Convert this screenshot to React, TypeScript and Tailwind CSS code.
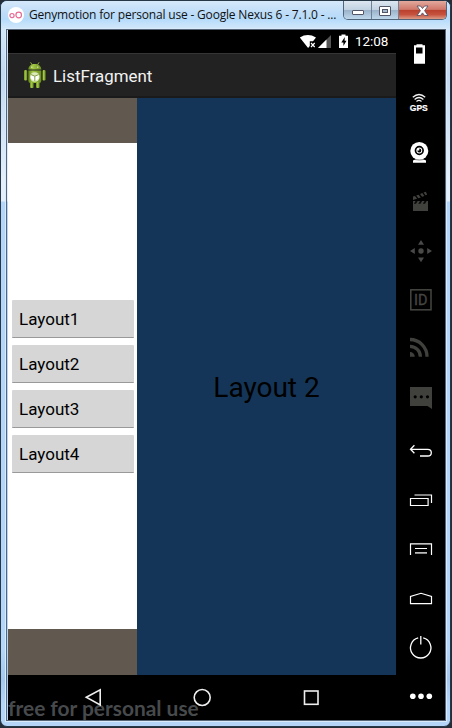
import React from "react";

const SIDEBAR_ICONS: React.ReactNode[] = [
  <g fill="#fff">
    <path fillRule="evenodd" d="M416.5 44.3h6v1h2.5v18.5h-11V45.3h2.5zM416 47.5v6h6.5v-6z" />
  </g>,
  <g fill="none" stroke="#f2f2f2" strokeWidth="1.3">
    <path d="M412.8 97.2Q419 91.8 425.2 97.2M414.6 99.4Q419 95.6 423.4 99.4M416.5 101.4Q419 99.4 421.5 101.4" />
    <text x="409.8" y="110.6" fill="#fff" stroke="#fff" strokeWidth="0.2" fontSize="8.6" fontWeight="700" fontFamily="'Liberation Sans', sans-serif" textLength="18" lengthAdjust="spacingAndGlyphs">GPS</text>
  </g>,
  <g>
    <circle cx="419.3" cy="150.9" r="9" fill="#fff" />
    <path d="M413 162.7v-2.2l3-1.5h7l3 1.5v2.2z" fill="#fff" />
    <path d="M411.5 158.4q7.8 3.2 15.6 0" fill="none" stroke="#000" strokeWidth=".5" />
    <circle cx="419.3" cy="150.5" r="3.8" fill="#fff" stroke="#000" strokeWidth="1.7" />
    <path d="M419.3 148.6v2h-2a2 2 0 1 0 2-2z" fill="#000" />
  </g>,
  <g fill="#40403d">
    <path d="M413 201h15v10h-15zM413 200v-3.4l2-.5 2.1 2.7-2.6.8zM416.2 195.6l2.4-.9 2.2 2.8-2.5.8zM420 194l2.3-.9 2.1 2.8-2.3.8zM423.6 192.6l2.2-.9 1.4 2.8-1.7.7z" />
    <path d="M415.5 201l-1.7 2.7h2.2l1.7-2.7zM420 201l-1.7 2.7h2.2l1.7-2.7zM424.5 201l-1.7 2.7h2.2l1.7-2.7z" fill="#090909" />
  </g>,
  <g fill="#494947">
    <circle cx="421" cy="251" r="2.7" />
    <path d="M421 240l3 4.8h-6zM421 262.2l3-4.8h-6zM410 251l4.8-3v6zM432 251l-4.8-3v6z" />
  </g>,
  <g>
    <rect x="410.8" y="289.8" width="20.2" height="20" fill="none" stroke="#454541" strokeWidth="1.5" />
    <text x="414.1" y="305" fill="#454541" stroke="#454541" strokeWidth=".35" fontSize="14" fontFamily="Roboto, sans-serif" textLength="13.4" lengthAdjust="spacingAndGlyphs">ID</text>
  </g>,
  <g fill="none" stroke="#40403d" strokeWidth="3.3">
    <path d="M410 339.5a17 17 0 0 1 17 17.2M410 346.3a10.4 10.4 0 0 1 10.4 10.4" />
    <path d="M410 352a4.8 4.8 0 0 1 4.8 4.8H410z" fill="#40403d" stroke="none" />
  </g>,
  <g>
    <path d="M410 387h22v22l-4.5-3H410z" fill="#40403d" />
    <g fill="#000"><circle cx="415.2" cy="396.8" r="1.6" /><circle cx="421.3" cy="396.8" r="1.6" /><circle cx="427.5" cy="396.8" r="1.6" /></g>
  </g>,
  <path d="M414.4 445.3l-3.9 4 3.9 4M410.5 449.4h17.2q3.6 0 3.6 3.3t-3.6 3.3H420" fill="none" stroke="#fff" strokeWidth="1.3" />,
  <g fill="none" stroke="#fff">
    <path d="M410.5 498.5h17.6v7h-17.6z" strokeWidth="1.2" />
    <path d="M414.5 495h17v8" strokeWidth="1.2" />
  </g>,
  <g fill="none" stroke="#fff">
    <path d="M410.5 555v-11.2h21V555" strokeWidth="1.2" />
    <path d="M415 548.5h12" />
    <path d="M415 552.8h12" stroke="#bbb" strokeWidth="1.8" />
  </g>,
  <path d="M410.5 603.7v-7.2l10.5-3.2 10.5 3.2v7.2z" fill="none" stroke="#fff" strokeWidth="1.2" />,
  <path d="M418.2 637.9a10.2 10.2 0 1 0 5 0M420.8 636v8.5" fill="none" stroke="#fff" strokeWidth="1.3" />,
  <g fill="#fff"><circle cx="412.8" cy="696.2" r="2.8" /><circle cx="421" cy="696.2" r="2.8" /><circle cx="429.3" cy="696.2" r="2.8" /></g>,
];

function TitleBar() {
  return (
    <div className="flex h-[28px] items-start bg-[linear-gradient(180deg,#d5e8fa_0%,#bddcf8_45%,#b5dbfa_65%,#d3e8fa_100%)] pl-[7px]">
      <svg className="mt-[6px] h-4 w-4 shrink-0" viewBox="0 0 16 16">
        <circle cx="8" cy="8" r="8" fill="#fff" />
        <g fill="none" stroke="#e76b93" strokeWidth="1.2"><circle cx="4" cy="8.6" r="2.1" /><circle cx="10.7" cy="8" r="2.8" /></g>
      </svg>
      <div className="ml-[5px] mt-[5px] w-[312px] whitespace-nowrap font-['Open_Sans',sans-serif] text-[12px] leading-[17px] tracking-[-0.18px] text-[#111]">
        Genymotion for personal use - Google Nexus 6 - 7.1.0 - ...
      </div>
      <div className="ml-[2px] flex h-[19px] w-[104px] overflow-hidden rounded-b-[5px] border border-t-0 border-[#51657a]">
        <div className="flex w-[28px] items-center justify-center border-r border-[#6d8297] bg-[linear-gradient(180deg,#dce6f0_0%,#c2d2e1_48%,#99b2c9_50%,#bfd7eb_100%)]">
          <div className="mt-[5px] h-[5px] w-[12px] rounded-[1px] border border-[#535666] bg-white" />
        </div>
        <div className="flex w-[27px] items-center justify-center border-r border-[#6d8297] bg-[linear-gradient(180deg,#dce6f0_0%,#c2d2e1_48%,#99b2c9_50%,#bfd7eb_100%)]">
          <div className="mt-[1px] flex h-[10px] w-[12px] items-center justify-center rounded-[1px] border border-[#535666] bg-white">
            <div className="h-[4px] w-[6px] border border-[#535666] bg-[#a5bacd]" />
          </div>
        </div>
        <div className="flex flex-1 items-center justify-center bg-[linear-gradient(180deg,#e3a99e_0%,#cf7769_47%,#b9402c_50%,#c6523d_75%,#dc9b85_100%)]">
          <svg className="mt-px h-[12px] w-[13px]" viewBox="0 0 13 12">
            <path d="M1 1h3.5l2 2.5 2-2.5H12L8.6 5.7 12 10.5H8.5l-2-2.6-2 2.6H1l3.4-4.8z" fill="#fff" stroke="#5a5364" strokeWidth=".9" />
          </svg>
        </div>
      </div>
    </div>
  );
}

function StatusBar() {
  return (
    <div className="flex h-[23px] items-start justify-end bg-black pr-[8px]">
      <svg className="mt-[4px] h-4 w-[50px]" viewBox="299 34 50 16">
        <path d="M299.8 37.4Q307.8 32.5 316 37.4l-3 3.8h-3.2v4.8l-1.7 2z" fill="#fff" />
        <path d="M311 43l3.7 4M314.7 43l-3.7 4" stroke="#fff" strokeWidth="1.2" />
        <path d="M331 35v13h-13z" fill="#555" />
        <path d="M326.5 39.5V48H318z" fill="#fff" />
        <path d="M341.5 34.5h4v1.3h2.5V48h-9V35.8h2.5z" fill="#fff" />
        <path d="M344.8 37l-3.5 5.4h2.1V46l3.1-5.2h-1.9z" fill="#000" />
      </svg>
      <div className="ml-[6px] mt-[2px] w-[33px] whitespace-nowrap font-[Roboto,sans-serif] text-[13.5px] leading-[18px] tracking-[-0.1px] text-white">12:08</div>
    </div>
  );
}

function ActionBar() {
  return (
    <div className="flex h-[45px] items-center border-b-2 border-t border-b-[#1a1a1a] border-t-[#353535] bg-[#222] pl-[15px]">
      <svg className="h-[28px] w-[24px]" viewBox="0 0 24 28">
        <defs>
          <linearGradient id="droid" x1="0" x2="1">
            <stop offset="0" stopColor="#63851b" /><stop offset=".35" stopColor="#a4ca45" /><stop offset="1" stopColor="#6b8d20" />
          </linearGradient>
        </defs>
        <path d="M7.6 1.4l2 3.2M16 1.4l-2 3.2" stroke="#91b43b" strokeWidth="1" />
        <g fill="url(#droid)">
          <path d="M5.3 8.5C5.3 1.2 18.3 1.2 18.3 8.5z" />
          <path d="M5.3 9.5h13v10q0 2.5-2.2 2.5H7.5q-2.2 0-2.2-2.5z" />
          <rect x="1" y="9" width="3.2" height="10.6" rx="1.4" />
          <rect x="19.4" y="9" width="3.2" height="10.6" rx="1.4" />
          <rect x="7" y="21" width="3.6" height="6" rx="1" />
          <rect x="13" y="21" width="3.6" height="6" rx="1" />
        </g>
        <circle cx="8.8" cy="6.1" r=".7" fill="#fff" /><circle cx="14.8" cy="6.1" r=".7" fill="#fff" />
        <circle cx="11.8" cy="16" r="4.8" fill="#dce9bc" />
        <path d="M8 13.6l3.8 1.6 3.8-1.6v4.2l-3.8 2.3L8 17.8z" fill="#fff" />
        <path d="M8 13.6l3.8 1.6 3.8-1.6M11.8 15.2v4.9" fill="none" stroke="#769536" strokeWidth=".9" />
      </svg>
      <div className="ml-[6px] mt-[2px] whitespace-nowrap font-[Roboto,sans-serif] text-[16.9px] leading-5 text-[#f2f2f2]">ListFragment</div>
    </div>
  );
}

function NavBar() {
  return (
    <div className="relative h-[45px] overflow-hidden bg-black">
      <div className="absolute left-0 top-[20px] whitespace-nowrap font-[Lato,sans-serif] text-[20.9px] font-bold leading-[26px] text-[#474a4c]">free for personal use</div>
      <svg className="relative block h-[45px] w-[388px]" viewBox="8 675 388 45" fill="none" stroke="#eee" strokeWidth="1.6">
        <path d="M86.3 697.3L100.2 689.8V705z" />
        <circle cx="202.2" cy="697.5" r="8" />
        <rect x="304.5" y="691" width="13.5" height="13.3" />
      </svg>
    </div>
  );
}

export default function App() {
  return (
    <div className="h-[728px] w-[452px] overflow-hidden bg-[#252e38]">
      <div className="flex h-[727px] w-[451px] flex-col overflow-hidden rounded-[7px] border border-[#263748] bg-[#b4d4f8]">
        <TitleBar />
        <div className="flex h-[692px] bg-[linear-gradient(180deg,#d4e8fb_0px,#c2d9f2_45px,#e4effb_150px,#e4effb_172px,#b4d6fb_173px,#b4d6fb_620px,#a4c8ef_650px,#b4d6fb_675px)] pl-[5px]">
          <div className="flex h-[692px] w-[440px] border border-[#566578] shadow-[0_0_0_1px_#d9eafb]">
            <div className="flex w-[389px] flex-col pl-px">
              <StatusBar />
              <ActionBar />
              <main className="flex h-[577px]">
                <section className="flex w-[129px] flex-col bg-[#61594f] pt-[45px]">
                  <div className="flex h-[486px] flex-col items-start justify-center gap-[7px] bg-white pl-[4px]">
                    {["Layout1", "Layout2", "Layout3", "Layout4"].map((label) => (
                      <button key={label} className="flex h-[38px] w-[122px] items-center rounded-[1px] border-b border-[#999] bg-[#d6d6d6] pl-[7px] pt-[3px] font-[Roboto,sans-serif] text-[17px] text-black">
                        {label}
                      </button>
                    ))}
                  </div>
                </section>
                <section className="flex flex-1 items-center justify-center bg-[#143557] pt-[2px] font-[Roboto,sans-serif] text-[28px] text-black">
                  Layout 2
                </section>
              </main>
              <NavBar />
            </div>
            <aside className="flex w-[49px] shrink-0 flex-col bg-black">
              {SIDEBAR_ICONS.map((icon, i) => (
                <svg key={i} className="block h-[49px] w-[49px] shrink-0" viewBox={`396 ${30 + i * 49} 49 49`}>
                  {icon}
                </svg>
              ))}
            </aside>
          </div>
        </div>
      </div>
    </div>
  );
}
